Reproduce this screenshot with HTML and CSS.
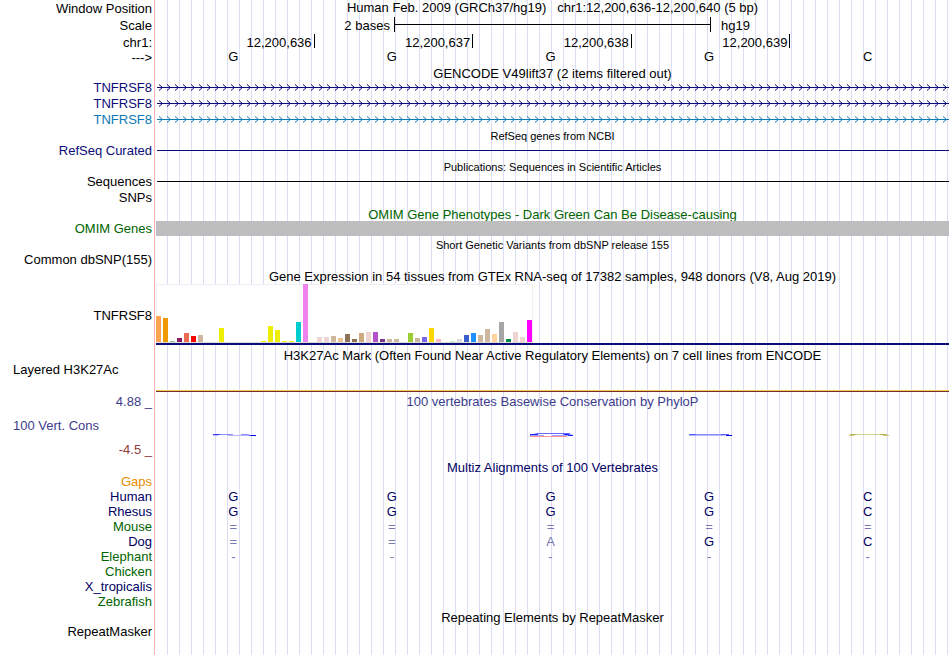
FILE: index.html
```html
<!DOCTYPE html>
<html lang="en">
<head>
<meta charset="utf-8">
<title>chr1:12,200,636-12,200,640</title>
<link rel="stylesheet" href="styles.css">
</head>
<body>
<main class="browser">
  <div class="row h17"><div class="label">Window Position</div><div class="title">Human Feb. 2009 (GRCh37/hg19) &nbsp; chr1:12,200,636-12,200,640 (5 bp)</div></div>
  <div class="row h17"><div class="label">Scale</div><div class="scale"><span class="scale-left">2 bases</span><span class="ruler"></span><span class="scale-right">hg19</span></div></div>
  <div class="row h15 coords"><div class="label">chr1:</div><div class="bases ticks"><span>12,200,636</span><span>12,200,637</span><span>12,200,638</span><span>12,200,639</span></div></div>
  <div class="row h16"><div class="label low">---&gt;</div><div class="bases"><span>G</span><span>G</span><span>G</span><span>G</span><span>C</span></div></div>
  <div class="row h15"><h2 class="title low">GENCODE V49lift37 (2 items filtered out)</h2></div>
  <div class="row h16 navy"><div class="label">TNFRSF8</div>
    <svg class="gene" height="15"><defs><pattern id="arrows-a" width="8" height="15" patternUnits="userSpaceOnUse"><path class="stem" d="M0 7.5H8"/><path class="head" d="M2 4.5L5.5 7.5L2 10.5"/></pattern></defs><rect width="100%" height="15" fill="url(#arrows-a)"/></svg></div>
  <div class="row h16 navy"><div class="label">TNFRSF8</div>
    <svg class="gene" height="15"><defs><pattern id="arrows-b" width="8" height="15" patternUnits="userSpaceOnUse"><path class="stem" d="M0 7.5H8"/><path class="head" d="M2 4.5L5.5 7.5L2 10.5"/></pattern></defs><rect width="100%" height="15" fill="url(#arrows-b)"/></svg></div>
  <div class="row h16 blue"><div class="label">TNFRSF8</div>
    <svg class="gene" height="15"><defs><pattern id="arrows-c" width="8" height="15" patternUnits="userSpaceOnUse"><path class="stem" d="M0 7.5H8"/><path class="head" d="M2 4.5L5.5 7.5L2 10.5"/></pattern></defs><rect width="100%" height="15" fill="url(#arrows-c)"/></svg></div>
  <div class="row h15"><h2 class="title small">RefSeq genes from NCBI</h2></div>
  <div class="row h15 navy"><div class="label">RefSeq Curated</div><div class="line"></div></div>
  <div class="row h16"><h2 class="title small">Publications: Sequences in Scientific Articles</h2></div>
  <div class="row h15"><div class="label">Sequences</div><div class="line"></div></div>
  <div class="row h17"><div class="label">SNPs</div></div>
  <div class="row h15 green"><h2 class="title low">OMIM Gene Phenotypes - Dark Green Can Be Disease-causing</h2></div>
  <div class="row h15 green"><div class="label">OMIM Genes</div><div class="band"></div></div>
  <div class="row h16"><h2 class="title small">Short Genetic Variants from dbSNP release 155</h2></div>
  <div class="row h16"><div class="label">Common dbSNP(155)</div></div>
  <div class="row h16"><h2 class="title low">Gene Expression in 54 tissues from GTEx RNA-seq of 17382 samples, 948 donors (V8, Aug 2019)</h2></div>
  <div class="row expression"><div class="label">TNFRSF8</div>
    <div class="plot"><div class="bars">
      <i style="height:26px;background:#ffa54f"></i><i style="height:24px;background:#ee9a00"></i><i style="height:1px;background:#8fbc8f"></i><i style="height:4px;background:#8b1c62"></i><i style="height:9px;background:#ee6a50"></i><i style="height:6px;background:#ff0000"></i>
      <i style="height:7px;background:#cdb79e"></i><i></i><i></i><i style="height:14px;background:#eeee00"></i><i></i><i></i>
      <i></i><i></i><i></i><i style="height:1px;background:#eeee00"></i><i style="height:16px;background:#eeee00"></i><i style="height:12px;background:#eeee00"></i>
      <i style="height:1px;background:#eeee00"></i><i style="height:1px;background:#eeee00"></i><i style="height:20px;background:#00cdcd"></i><i style="height:58px;background:#ee82ee"></i><i></i><i style="height:5px;background:#eed5d2"></i>
      <i style="height:5px;background:#eed5d2"></i><i style="height:6px;background:#cdb79e"></i><i style="height:4px;background:#eec591"></i><i style="height:8px;background:#8b7355"></i><i style="height:3px;background:#8b7355"></i><i style="height:9px;background:#cdaa7d"></i>
      <i style="height:10px;background:#eed5d2"></i><i style="height:10px;background:#b452cd"></i><i style="height:3px;background:#7a378b"></i><i style="height:3px;background:#cdb79e"></i><i style="height:3px;background:#cdb79e"></i><i></i>
      <i style="height:9px;background:#9acd32"></i><i style="height:4px;background:#cdb79e"></i><i style="height:5px;background:#7a67ee"></i><i style="height:14px;background:#ffd700"></i><i style="height:3px;background:#ffb6c1"></i><i></i>
      <i style="height:1px;background:#b4eeb4"></i><i style="height:3px;background:#d9d9d9"></i><i style="height:7px;background:#3a5fcd"></i><i style="height:9px;background:#1e90ff"></i><i style="height:7px;background:#cdb79e"></i><i style="height:13px;background:#cdb79e"></i>
      <i style="height:8px;background:#ffd39b"></i><i style="height:20px;background:#a6a6a6"></i><i style="height:3px;background:#008b45"></i><i style="height:10px;background:#eed5d2"></i><i style="height:5px;background:#eed5d2"></i><i style="height:22px;background:#ff00ff"></i>
    </div></div></div>
  <div class="row spaced"><h2 class="title">H3K27Ac Mark (Often Found Near Active Regulatory Elements) on 7 cell lines from ENCODE</h2></div>
  <div class="row layered"><div class="label start">Layered H3K27Ac</div><div class="signal"></div></div>
  <div class="row wiggle indigo">
    <div class="label stack"><span>4.88 _</span><span class="start">100 Vert. Cons</span><span class="maroon">-4.5 _</span></div>
    <div class="scores"><h2 class="title">100 vertebrates Basewise Conservation by PhyloP</h2>
      <div class="bases marks">
        <span><svg width="43" height="5"><path d="M0 1.5H7M36 2.5H43" stroke="#3c3cff"/><path d="M7 1.5H20M28 1.5H36" stroke="#8c8cff"/><path d="M0 2.5H5M15 2.5H36" stroke="#b4b4ff"/><path d="M38 2.5H43" stroke="#0000e6"/></svg></span>
        <span></span>
        <span><svg width="43" height="5"><path d="M0 2L7 1M33 1L43 2.5" stroke="#0000ff"/><path d="M7 .5H40" stroke="#6464ff"/><path d="M2 2.5H14M22 2.5H42" stroke="#a0a0ff"/><path d="M0 1.5H8M38 2.5H43" stroke="#1e1eff"/><path d="M0 3.5H37" stroke="#ff9696"/></svg></span>
        <span><svg width="43" height="5"><path d="M0 1.5H7M32 1.5H40" stroke="#5a5aff"/><path d="M7 1.5H32" stroke="#8c8cff"/><path d="M0 2.5H36" stroke="#b4b4ff"/><path d="M37 2.5H43" stroke="#0000e6"/></svg></span>
        <span><svg width="40" height="5"><path d="M1 1.5H7M31 1.5H38" stroke="#b4b450"/><path d="M7 1.5H31" stroke="#d2d296"/><path d="M0 2.5H5M34 2.5H40" stroke="#c8c878"/></svg></span>
      </div></div></div>
  <div class="row h14 deep"><h2 class="title">Multiz Alignments of 100 Vertebrates</h2></div>
  <div class="row h15"><div class="label gaps">Gaps</div></div>
  <div class="row h15 deep"><div class="label">Human</div><div class="bases"><span>G</span><span>G</span><span>G</span><span>G</span><span>C</span></div></div>
  <div class="row h15 deep"><div class="label">Rhesus</div><div class="bases"><span>G</span><span>G</span><span>G</span><span>G</span><span>C</span></div></div>
  <div class="row h15 green"><div class="label">Mouse</div><div class="bases pale"><span>=</span><span>=</span><span>=</span><span>=</span><span>=</span></div></div>
  <div class="row h15 deep"><div class="label">Dog</div><div class="bases"><span class="pale">=</span><span class="pale">=</span><span class="pale">A</span><span>G</span><span>C</span></div></div>
  <div class="row h15 green"><div class="label">Elephant</div><div class="bases pale"><span>-</span><span>-</span><span>-</span><span>-</span><span>-</span></div></div>
  <div class="row h15 green"><div class="label">Chicken</div></div>
  <div class="row h15 deep"><div class="label">X_tropicalis</div></div>
  <div class="row h15 green"><div class="label">Zebrafish</div></div>
  <div class="row h15"><h2 class="title low">Repeating Elements by RepeatMasker</h2></div>
  <div class="row h15"><div class="label">RepeatMasker</div></div>
</main>
</body>
</html>
```
FILE: styles.css
```css
body {
  margin: 0;
  background: #fff;
  color: #000;
  font: 13px/15px "Liberation Sans", Arial, sans-serif;
}

/* Red divider after the labels, then a guide line every 12px. */
.browser {
  min-height: 100vh;
  background:
    linear-gradient(#ffb4b4, #ffb4b4) 154px 0 / 1px 100% no-repeat,
    linear-gradient(#fff, #fff) 0 0 / 156px 100% no-repeat,
    repeating-linear-gradient(90deg, #dcdcf5 0 1px, #fff 1px 12px) 155px 0 no-repeat;
}

.row {
  display: grid;
  grid-template-columns: 156px 1fr;
  padding-right: 1px;
}
.h14 { height: 14px; }
.h15 { height: 15px; }
.h16 { height: 16px; }
.h17 { height: 17px; }
.h17 .label, .scale, .coords, .low { line-height: 17px; }

.label {
  padding-right: 4px;
  text-align: right;
  white-space: nowrap;
}
.start { padding-left: 13px; text-align: left; }
.title {
  grid-column: 2;
  margin: 0;
  font-size: 13px;
  font-weight: normal;
  text-align: center;
  white-space: nowrap;
}
.small { font-size: 11px; line-height: 17px; }
.h16 .small { line-height: 19px; }

.scale { display: grid; grid-template-columns: 3fr 4fr 3fr; }
.scale-left { padding-right: 4px; text-align: right; }
.scale-right { padding-left: 10px; }
.ruler {
  height: 15px;
  border: solid #000;
  border-width: 0 1px;
  background: linear-gradient(#000, #000) 0 7px / 100% 1px no-repeat;
}

.bases { display: grid; grid-template-columns: repeat(5, 1fr); }
.bases span { padding-right: 4px; text-align: center; }
.ticks span {
  height: 14px;
  padding-right: 2px;
  border-right: 1px solid #000;
  text-align: right;
}

.gene { display: block; width: calc(100% - 1px); margin-left: 1px; }
.stem { stroke: currentColor; shape-rendering: crispEdges; }
.head { fill: none; stroke: currentColor; }
.line { height: 1px; margin: 7px 0 0 1px; background: currentColor; }
.band { background: #bebebe; }

.expression { height: 61px; }
.expression .label { padding-top: 24px; }
.plot { border-bottom: 2px solid #0c0c78; }
.bars {
  display: flex;
  gap: 2px;
  align-items: flex-end;
  width: max-content;
  height: 58px;
  padding-right: 1px;
  border-bottom: 1px solid #dcdcdc;
  background: #fff;
  box-shadow: inset 0 1px #f0f0f0, inset -1px 0 #f0f0f0, inset 1px 0 #f0f0f0;
}
.bars i { width: 5px; }

.spaced { padding-top: 3px; height: 14px; }
.layered { height: 30px; }
.signal {
  align-self: end;
  height: 1px;
  border-top: 1px solid #ffc850;
  background: #6e3232;
}
.wiggle { height: 68px; }
.stack { display: flex; flex-direction: column; gap: 9px; padding-top: 2px; }
.scores { padding-top: 2px; }
.marks { margin-top: 24px; }
.marks span { padding-right: 2px; }
.marks svg { display: block; margin: 0 auto; }

.navy { color: #0c0c78; }
.blue { color: #0c78b4; }
.green { color: #006400; }
.deep { color: #000064; }
.indigo { color: #3c3c8c; }
.maroon { color: #8c3c3c; }
.gaps { color: #e68c00; }
.pale { color: #7878b4; }
```
